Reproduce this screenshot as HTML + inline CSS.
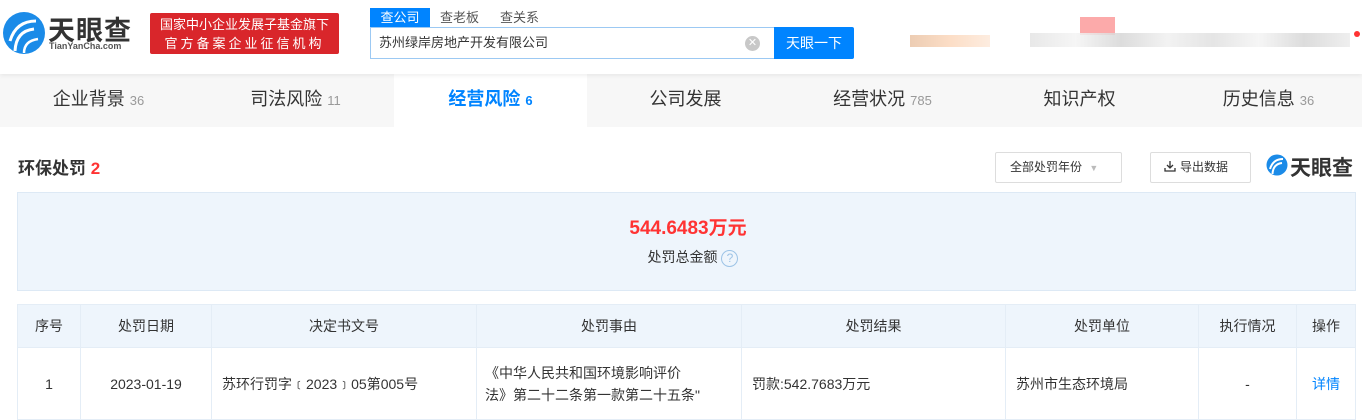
<!DOCTYPE html>
<html><head><meta charset="utf-8"><style>
*{margin:0;padding:0;box-sizing:border-box}
body{width:1362px;height:416px;overflow:hidden;background:#fff;font-family:"Liberation Sans","Noto Sans CJK SC",sans-serif;color:#333;position:relative}
.abs{position:absolute}
.hdr{position:absolute;left:0;top:0;width:1362px;height:74px;background:#fff;box-shadow:0 2px 4px rgba(0,0,0,.06);z-index:2}
.tabs{position:absolute;left:0;top:74px;width:1362px;height:53px;background:#f7f7f7}
.tab{position:absolute;top:0;height:53px;line-height:50px;font-size:18px;color:#333;text-align:center}
.tab small{font-size:13px;color:#999}
table{border-collapse:collapse;position:absolute;left:17px;top:304px;width:1339px;font-size:14px}
td,th{border:1px solid #e4edf6;text-align:center;font-weight:normal;color:#333}
th{background:#eef5fc;height:43px}
td{height:72px;line-height:22px}
</style></head><body>
<div class="hdr">
 <svg class="abs" style="left:2px;top:11px" width="44" height="44" viewBox="0 0 44 44">
  <circle cx="22" cy="22" r="21" fill="#1b8be8"/>
  <path d="M8 30 Q14 10 34 10" stroke="#fff" stroke-width="3" fill="none"/>
  <path d="M13 40 Q14 20 32 18" stroke="#fff" stroke-width="3" fill="none"/>
  <path d="M22 42 Q22 30 36 28" stroke="#fff" stroke-width="2.5" fill="none"/>
 </svg>
 <div class="abs" style="left:48px;top:9px;font-size:27px;font-weight:bold;color:#333;letter-spacing:1px">天眼查</div>
 <div class="abs" style="left:49px;top:41px;font-size:9px;color:#555;font-weight:bold">TianYanCha.com</div>
 <div class="abs" style="left:150px;top:13px;width:189px;height:41px;background:#d9262b;border-radius:2px;color:#fff;font-size:13px;line-height:19px;text-align:center;padding-top:2px">国家中小企业发展子基金旗下<br><span style="letter-spacing:3px">官方备案企业征信机构</span></div>
 <div class="abs" style="left:370px;top:8px;width:60px;height:19px;background:#0084ff;color:#fff;font-size:13px;line-height:19px;text-align:center">查公司</div>
 <div class="abs" style="left:440px;top:8px;font-size:13px;color:#555;line-height:19px">查老板</div>
 <div class="abs" style="left:500px;top:8px;font-size:13px;color:#555;line-height:19px">查关系</div>
 <div class="abs" style="left:370px;top:27px;width:404px;height:32px;border:1px solid #9cc9f3;border-right:none;font-size:13px;line-height:30px;padding-left:8px;color:#333">苏州绿岸房地产开发有限公司</div>
 <div class="abs" style="left:745px;top:36px;width:15px;height:15px;border-radius:50%;background:#c8c8c8;color:#fff;font-size:11px;line-height:15px;text-align:center">✕</div>
 <div class="abs" style="left:774px;top:27px;width:80px;height:32px;background:#0084ff;color:#fff;font-size:14px;line-height:32px;text-align:center;border-radius:0 2px 2px 0">天眼一下</div>
 <div class="abs" style="left:910px;top:35px;width:80px;height:12px;background:linear-gradient(90deg,#e8c0a0,#fbd5b8,#fde8d8);opacity:.8"></div>
 <div class="abs" style="left:1080px;top:17px;width:35px;height:18px;background:#fcaaaa"></div>
 <div class="abs" style="left:1030px;top:33px;width:320px;height:14px;background:linear-gradient(90deg,#e4e4e4,#f4f4f4,#d6d6d6,#f0f0f0,#e0e0e0,#f4f4f4,#d6d6d6,#ececec);opacity:.85"></div>
 <div class="abs" style="left:1354px;top:31px;width:6px;height:6px;border-radius:50%;background:#f33"></div>
</div>
<div class="tabs">
 <div class="tab" style="left:0;width:197px">企业背景 <small>36</small></div>
 <div class="tab" style="left:197px;width:197px">司法风险 <small>11</small></div>
 <div class="tab" style="left:394px;width:193px;background:#fff;color:#0084ff;font-weight:bold">经营风险 <small style="color:#0084ff">6</small></div>
 <div class="tab" style="left:587px;width:197px">公司发展</div>
 <div class="tab" style="left:784px;width:197px">经营状况 <small>785</small></div>
 <div class="tab" style="left:981px;width:197px">知识产权</div>
 <div class="tab" style="left:1170px;width:197px">历史信息 <small>36</small></div>
</div>
<div class="abs" style="left:18px;top:154px;font-size:17px;font-weight:bold;color:#333">环保处罚 <span style="color:#f33">2</span></div>
<div class="abs" style="left:995px;top:152px;width:127px;height:31px;border:1px solid #ddd;border-radius:2px;font-size:12px;line-height:29px;padding-left:14px;color:#333">全部处罚年份 <span style="color:#bbb;font-size:9px;margin-left:4px">▼</span></div>
<div class="abs" style="left:1150px;top:152px;width:101px;height:31px;border:1px solid #ddd;border-radius:2px;font-size:12px;line-height:29px;padding-left:13px;color:#333">
 <svg width="12" height="12" viewBox="0 0 12 12" style="vertical-align:-1px;margin-right:4px"><path d="M6 1v7M3 5l3 3 3-3M1 8v3h10V8" stroke="#333" stroke-width="1.3" fill="none"/></svg>导出数据</div>
<svg class="abs" style="left:1266px;top:154px" width="22" height="22" viewBox="0 0 44 44"><circle cx="22" cy="22" r="21" fill="#1b8be8"/><path d="M8 30 Q14 10 34 10" stroke="#fff" stroke-width="4" fill="none"/><path d="M13 40 Q14 20 32 18" stroke="#fff" stroke-width="4" fill="none"/></svg>
<div class="abs" style="left:1290px;top:152px;font-size:21px;font-weight:bold;color:#333">天眼查</div>
<div class="abs" style="left:17px;top:192px;width:1339px;height:99px;background:#eef5fc;border:1px solid #dde9f5"></div>
<div class="abs" style="left:0;top:213px;width:1376px;text-align:center;font-size:19px;font-weight:bold;color:#f33">544.6483万元</div>
<div class="abs" style="left:0;top:247px;width:1362px;text-align:center;font-size:14px;color:#333;padding-left:24px">处罚总金额 <span style="display:inline-block;width:17px;height:17px;border:1px solid #9cc3e6;border-radius:50%;color:#9cc3e6;font-size:12px;line-height:15px;text-align:center">?</span></div>
<table>
<tr><th style="width:63px">序号</th><th style="width:131px">处罚日期</th><th style="width:265px">决定书文号</th><th style="width:265px">处罚事由</th><th style="width:264px">处罚结果</th><th style="width:193px">处罚单位</th><th style="width:98px">执行情况</th><th>操作</th></tr>
<tr><td>1</td><td>2023-01-19</td><td style="text-align:left;padding-left:10px">苏环行罚字﹝2023﹞05第005号</td><td style="text-align:left;padding-left:8px">《中华人民共和国环境影响评价<br>法》第二十二条第一款第二十五条"</td><td style="text-align:left;padding-left:10px">罚款:542.7683万元</td><td style="text-align:left;padding-left:10px">苏州市生态环境局</td><td>-</td><td style="color:#0084ff">详情</td></tr>
</table>
</body></html>
